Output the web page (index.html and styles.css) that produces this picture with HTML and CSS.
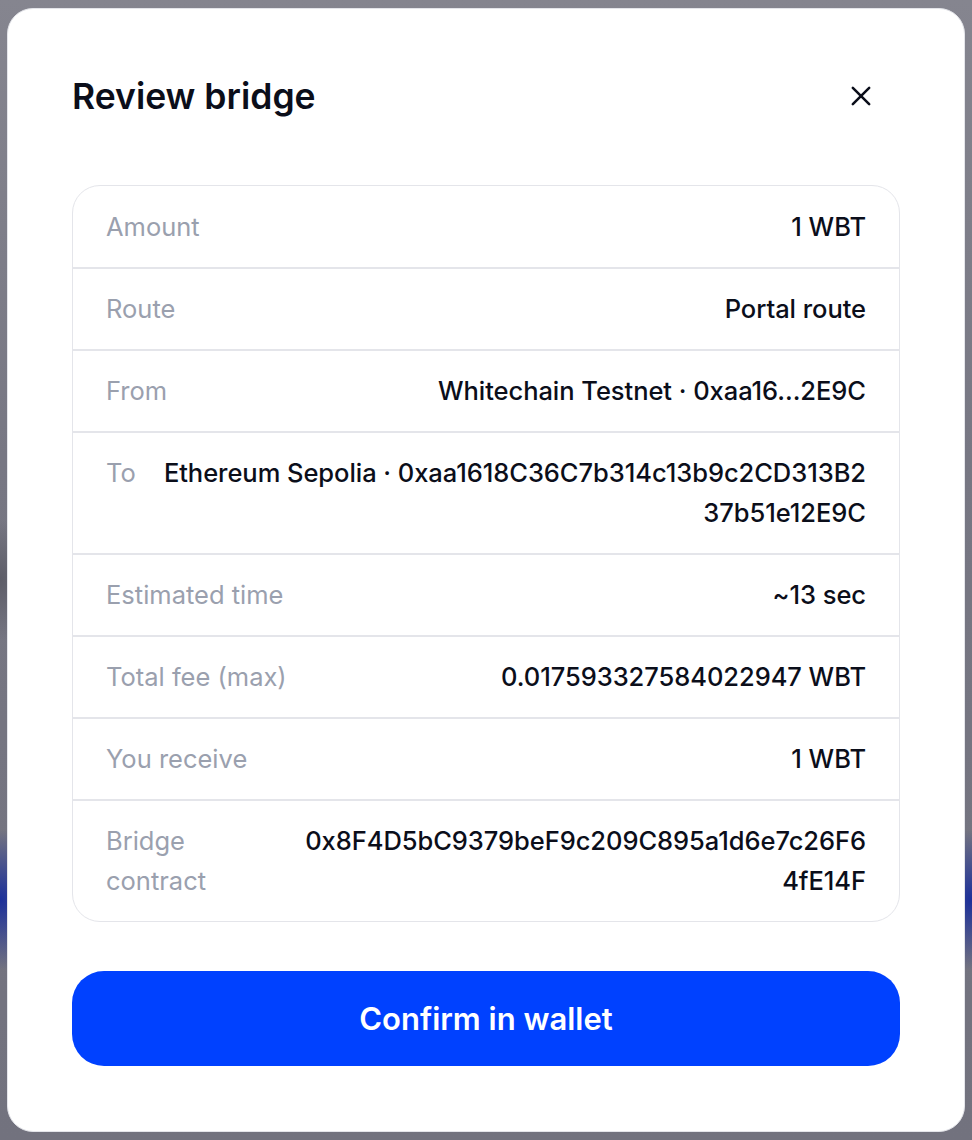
FILE: index.html
```html
<!DOCTYPE html>
<html lang="en">
  <head>
    <meta charset="UTF-8" />
    <meta name="viewport" content="width=device-width, initial-scale=1.0" />
    <title>Review bridge</title>
    <link rel="stylesheet" href="styles.css">
  </head>
  <body>
    <div class="modal">
      <div class="modal-header">
        <h2>Review bridge</h2>
        <button class="btn-close" aria-label="Close">
          <svg width="28" height="28" viewBox="0 0 24 24" fill="none" stroke="currentColor" stroke-width="2.2" stroke-linecap="round">
            <path d="M5 5L19 19M19 5L5 19" />
          </svg>
        </button>
      </div>

      <div class="details">
        <div class="row">
          <span class="label">Amount</span>
          <span class="value">1 WBT</span>
        </div>
        <div class="row">
          <span class="label">Route</span>
          <span class="value">Portal route</span>
        </div>
        <div class="row">
          <span class="label">From</span>
          <span class="value">Whitechain Testnet · 0xaa16...2E9C</span>
        </div>
        <div class="row">
          <span class="label">To</span>
          <span class="value">Ethereum Sepolia · 0xaa1618C36C7b314c13b9c2CD313B237b51e12E9C</span>
        </div>
        <div class="row">
          <span class="label">Estimated time</span>
          <span class="value">~13 sec</span>
        </div>
        <div class="row">
          <span class="label">Total fee (max)</span>
          <span class="value">0.017593327584022947 WBT</span>
        </div>
        <div class="row">
          <span class="label">You receive</span>
          <span class="value">1 WBT</span>
        </div>
        <div class="row">
          <span class="label">Bridge contract</span>
          <span class="value">0x8F4D5bC9379beF9c209C895a1d6e7c26F64fE14F</span>
        </div>
      </div>

      <button class="btn-confirm">Confirm in wallet</button>
    </div>
  </body>
</html>
```

FILE: styles.css
```css
html,
body {
  margin: 0;
}
body {
  font-family: Inter, "Noto Sans", sans-serif;
  color: #0b0e1a;
  padding: 8px 7px;
  min-height: 1124px;
  background-color: #7b7b87;
  background-image:
    radial-gradient(ellipse 60px 70px at 0 900px, #1b2f9a, rgba(27, 47, 154, 0)),
    radial-gradient(ellipse 60px 70px at 972px 900px, #1b2f9a, rgba(27, 47, 154, 0)),
    radial-gradient(ellipse 40px 60px at 0 580px, #5d5d68, rgba(93, 93, 104, 0)),
    linear-gradient(#85858f, #777783 40%, #72727e);
}
.modal {
  background: #fff;
  border: 1px solid #e4e5ea;
  border-radius: 26px;
  padding: 65px 64px 65px;
}
.modal-header {
  display: flex;
  align-items: center;
  justify-content: space-between;
  height: 44px;
  margin-bottom: 67px;
}
.modal-header h2 {
  margin: 0;
  font-size: 35.5px;
  font-weight: 600;
  letter-spacing: 0;
}
.btn-close {
  background: none;
  border: none;
  padding: 0;
  margin-right: 25px;
  color: #0b0e1a;
  display: flex;
  cursor: pointer;
}
.details {
  border: 1px solid #e4e5ea;
  border-radius: 28px;
}
.row {
  display: flex;
  gap: 26px;
  padding: 20px 33px;
  font-size: 25.5px;
  line-height: 40px;
  border-top: 2px solid #e4e5ea;
}
.row:first-child {
  border-top: none;
  padding-top: 21px;
}
.label {
  color: #9aa0ae;
}
.value {
  flex: 1 1 auto;
  text-align: right;
  word-break: break-all;
  font-weight: 500;
  letter-spacing: -0.05px;
}
.btn-confirm {
  display: block;
  width: 100%;
  height: 95px;
  margin-top: 49px;
  border: none;
  border-radius: 32px;
  background: #0041ff;
  color: #fff;
  font-family: Inter, "Noto Sans", sans-serif;
  font-size: 31px;
  font-weight: 600;
  cursor: pointer;
}
```
